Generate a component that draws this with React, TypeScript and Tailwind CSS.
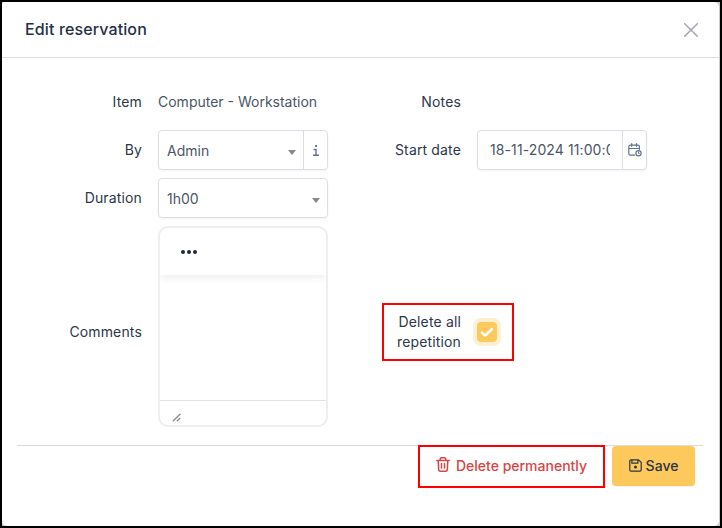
import React from "react";

const label = "shrink-0 text-right tracking-[0.15px] text-[#2c384a]";

function Caret() {
  return (
    <svg width="8" height="5" viewBox="0 0 8 5" className="shrink-0">
      <path d="M0 0h8L4 5z" fill="#888" />
    </svg>
  );
}

function Row({ name, children, className = "h-10" }: { name: string; children?: React.ReactNode; className?: string }) {
  return (
    <div className={`flex items-center gap-4 ${className}`}>
      <div className={`${label} w-[140px]`}>{name}</div>
      {children}
    </div>
  );
}

const box = "flex h-10 w-[170px] shrink-0 rounded-[4px] border border-[#dadfe5] shadow-[0_1px_2px_rgba(30,41,59,0.06)]";

function CalendarClock() {
  return (
    <svg width="14" height="14" viewBox="0 0 14 14" fill="none" stroke="#61718f" strokeWidth="1.2" strokeLinecap="round" strokeLinejoin="round">
      <path d="M6.6 12.2H2.2A1.4 1.4 0 0 1 .8 10.800V3.600A1.400 1.400 0 0 1 2.200 2.200H10A1.400 1.400 0 0 1 11.400 3.600V6.300M3.700.7v2.600M8.500.7v2.600M.8 5.500h10.600" />
      <circle cx="10.500" cy="10.200" r="2.600" />
      <path d="M10.500 8.900v1.500h.8" strokeWidth="1" />
    </svg>
  );
}

export default function App() {
  return (
    <div className="h-[528px] w-[722px] border-2 border-black bg-[#c9ccd0] pr-px font-['Inter',sans-serif] text-[14px] leading-5 text-[#4b5665]">
      <div className="flex h-full w-full flex-col rounded-[5px] rounded-tl-[3px] bg-white">
        <header className="flex h-14 shrink-0 items-center justify-between border-b border-[#dadde2] pr-[21px] pb-0.5 pl-[23px]">
          <h1 className="text-[16px] font-medium tracking-[0.12px] text-[#253144]">Edit reservation</h1>
          <svg width="14" height="14" viewBox="0 0 14 14" stroke="#a2a6ae" strokeWidth="1.5" strokeLinecap="round" className="mt-0.5">
            <path d="M.7.7l12.600 12.600M13.300.7L.7 13.300" />
          </svg>
        </header>

        <div className="flex pt-6">
          <div className="flex w-[326px] flex-col gap-2">
            <Row name="Item">
              <span className="whitespace-nowrap">Computer - Workstation</span>
            </Row>
            <Row name="By">
              <div className={box}>
                <div className="flex flex-1 items-center justify-between pt-0.5 pr-[7px] pl-2">
                  Admin
                  <span className="pt-0.5"><Caret /></span>
                </div>
                <div className="flex w-6 items-center justify-center border-l border-[#dadfe5]">
                  <svg width="6" height="11" viewBox="0 0 6 11" fill="none" stroke="#61718f" strokeWidth="1.400">
                    <path d="M.5 4.500h2.500v6M0 10.300h6" />
                    <path d="M2.100 1h1.900" strokeWidth="2" />
                  </svg>
                </div>
              </div>
            </Row>
            <Row name="Duration">
              <div className={box}>
                <div className="flex flex-1 items-center justify-between pt-0.5 pr-[7px] pl-2">
                  1h00
                  <span className="pt-0.5"><Caret /></span>
                </div>
              </div>
            </Row>
            <Row name="Comments" className="h-[201px] [&>div:first-child]:pt-[11px]">
              <div className="flex h-[201px] w-[170px] shrink-0 flex-col overflow-hidden rounded-[10px] border-2 border-[#eee]">
                <div className="flex h-[47px] shrink-0 items-center gap-0.5 pl-[21px] shadow-[0_3px_7px_rgba(34,47,62,0.08)]">
                  <i className="size-1 rounded-full bg-[#1e293b]" />
                  <i className="size-1 rounded-full bg-[#1e293b]" />
                  <i className="size-1 rounded-full bg-[#1e293b]" />
                </div>
                <div className="flex-1" />
                <div className="h-[25px] border-t border-[#e3e3e3] pt-3 pl-3">
                  <svg width="9" height="9" viewBox="0 0 9 9" stroke="#8b9097" strokeWidth="1.400">
                    <path d="M.8 8.300L8.500.7M4.800 8.300L8.300 5" />
                  </svg>
                </div>
              </div>
            </Row>
          </div>

          <div className="flex w-[319px] flex-col gap-2">
            <div className="flex h-10 items-center">
              <div className={`${label} w-[133px]`}>Notes</div>
            </div>
            <div className="flex h-10 items-center gap-4">
              <div className={`${label} w-[133px]`}>Start date</div>
              <div className={box}>
                <div className="flex flex-1 items-center overflow-hidden px-3">
                  <div className="w-[121px] overflow-hidden whitespace-nowrap tracking-[0.1px]">18-11-2024 11:00:00</div>
                </div>
                <div className="flex w-6 shrink-0 items-center justify-center border-l border-[#dadfe5]">
                  <CalendarClock />
                </div>
              </div>
            </div>
            <div className="mt-[125px] ml-[54px] flex h-[58px] w-[132px] items-center gap-4 border-2 border-[#ff0000]">
              <div className={`${label} w-[77px]`}>
                Delete all
                <br />
                repetition
              </div>
              <div className="flex size-5 items-center justify-center rounded-[4px] bg-[#fec95c] shadow-[0_0_0_4px_#fff0d2]">
                <svg width="14" height="11" viewBox="0 0 14 11" fill="none" stroke="white" strokeWidth="2.500" strokeLinecap="round" strokeLinejoin="round">
                  <path d="M2 5.700l3.200 3L12 2" />
                </svg>
              </div>
            </div>
          </div>
        </div>

        <footer className="mt-[18px] mr-4 ml-[15px] flex items-start justify-end border-t border-[#dcdcdc] pr-2 font-medium">
          <button className="-mt-px mr-[7px] flex h-[43px] w-[187px] items-center justify-center gap-1.5 border-2 border-[#ff0000] bg-white pb-px text-[#d84545]">
            <svg width="14" height="15" viewBox="0 0 14 15" fill="none" stroke="currentColor" strokeWidth="1.500" strokeLinecap="round" strokeLinejoin="round" className="-mt-1">
              <path d="M.8 3.400h12.400M2.200 3.600l.5 9a1.500 1.500 0 0 0 1.500 1.600h5.600a1.500 1.500 0 0 0 1.500-1.600l.5-9M4.300 3.200V1.900a1.100 1.100 0 0 1 1.100-1.100h3.200a1.100 1.100 0 0 1 1.100 1.100v1.300M5.500 6.500v4.500M8.500 6.500v4.500" />
            </svg>
            Delete permanently
          </button>
          <button className="flex h-10 w-[83px] items-center justify-center gap-1 rounded-[4px] bg-[#fec95c] text-[#2a3445] shadow-[0_1px_1px_rgba(30,41,59,0.06)]">
            <svg width="13" height="13" viewBox="0 0 13 13" fill="none" stroke="currentColor" strokeWidth="1.200" strokeLinejoin="round" className="-mt-px">
              <path d="M2 .8h7.600l2.600 2.600V11a1.200 1.200 0 0 1-1.200 1.200H2A1.200 1.200 0 0 1 .8 11V2A1.200 1.200 0 0 1 2 .8zM2.900.9v3.300h6V.9" />
              <circle cx="6.500" cy="8" r="1.500" fill="currentColor" stroke="none" />
            </svg>
            Save
          </button>
        </footer>
      </div>
    </div>
  );
}
